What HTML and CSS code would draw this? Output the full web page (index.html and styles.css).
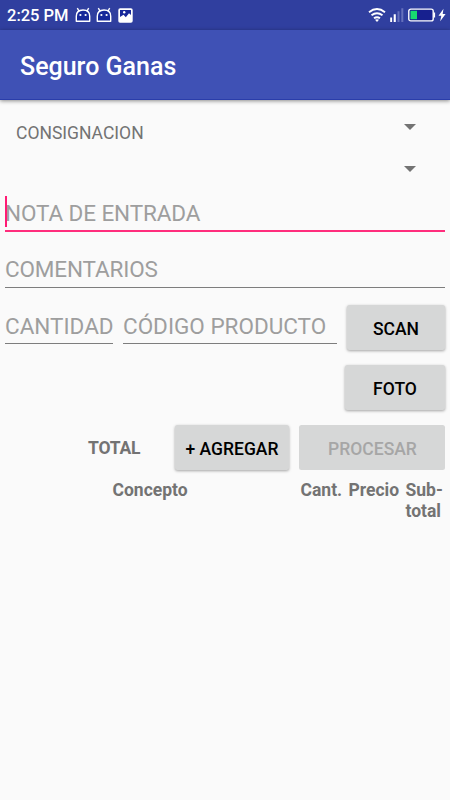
FILE: index.html
```html
<!DOCTYPE html>
<html lang="es">
  <head>
    <meta charset="utf-8">
    <title>Seguro Ganas</title>
    <link rel="stylesheet" href="styles.css">
  </head>

  <body>
    <div class="status">
      <span class="hora">2:25 PM</span>
      <svg class="android" width="16" height="16" viewBox="0 0 16 16">
        <path d="M1.3 14.2V9.2C1.3 5.5 3.8 3 8 3S14.7 5.5 14.7 9.2v5z M4 4L2.3 1.2 M12 4L13.7 1.2"/>
        <circle cx="5.4" cy="8" r="1.1"/>
        <circle cx="10.6" cy="8" r="1.1"/>
      </svg>
      <svg class="android" width="16" height="16" viewBox="0 0 16 16">
        <path d="M1.3 14.2V9.2C1.3 5.5 3.8 3 8 3S14.7 5.5 14.7 9.2v5z M4 4L2.3 1.2 M12 4L13.7 1.2"/>
        <circle cx="5.4" cy="8" r="1.1"/>
        <circle cx="10.6" cy="8" r="1.1"/>
      </svg>
      <svg class="imagen" width="15" height="15" viewBox="0 0 15 15">
        <rect x="0.3" y="0.3" width="14.4" height="14.4" rx="1.8" fill="#fff"/>
        <path d="M2 2h11v5l-2-1.8-3.2 4-2.3-2.4L2 9z" fill="#17289a"/>
        <circle cx="6.2" cy="4.3" r="1.2" fill="#fff"/>
      </svg>
      <span class="espacio"></span>
      <svg class="wifi" width="18" height="15" viewBox="0 0 18 15">
        <path d="M1 4.2Q9-2 17 4.2M3.5 7.3Q9 3 14.5 7.3M6 10.3Q9 8 12 10.3"/>
        <path d="M7 11.7Q9 10.6 11 11.7L9 14z" class="punto"/>
      </svg>
      <svg class="senal" width="14" height="14" viewBox="0 0 14 14">
        <path d="M0.2 9.5h1.9V14H.2zM3.7 6.3h2.1V14H3.7z" fill="#fff"/>
        <path d="M7.5 3.2h2V14h-2zM11.3 0.2h2V14h-2z" fill="#6570bc"/>
      </svg>
      <svg class="bateria" width="28" height="14" viewBox="0 0 28 14">
        <rect x="0.8" y="1.1" width="24.4" height="11.8" rx="2" fill="#17208f" stroke="#fff" stroke-width="1.4"/>
        <rect x="2.5" y="2.8" width="6.5" height="8.4" fill="#17dc70"/>
        <path d="M25.5 4.5h1.6v5h-1.6z" fill="#fff"/>
      </svg>
      <svg class="rayo" width="8" height="14" viewBox="0 0 8 14">
        <path d="M5.5 0.7L0.5 7.8H3.3L2.2 13.3 7.6 5.9H4.7z" fill="#fff"/>
      </svg>
    </div>

    <header class="barra">
      <h1>Seguro Ganas</h1>
    </header>

    <main class="contenido">
      <div class="spinner">
        <span class="spinner-texto">CONSIGNACION</span>
        <span class="flecha"></span>
      </div>
      <div class="spinner spinner-vacio">
        <span class="flecha"></span>
      </div>

      <div class="campo campo-activo"><span class="cursor"></span>NOTA DE ENTRADA</div>
      <div class="campo campo-comentarios">COMENTARIOS</div>

      <div class="fila">
        <div class="campo campo-cantidad">CANTIDAD</div>
        <div class="campo campo-codigo">CÓDIGO PRODUCTO</div>
        <button class="boton boton-scan">SCAN</button>
      </div>

      <div class="fila fila-foto">
        <button class="boton boton-foto">FOTO</button>
      </div>

      <div class="fila fila-total">
        <span class="total">TOTAL</span>
        <button class="boton boton-agregar">+ AGREGAR</button>
        <button class="boton boton-procesar" disabled>PROCESAR</button>
      </div>

      <div class="tabla">
        <span>Concepto</span>
        <span>Cant.</span>
        <span>Precio</span>
        <span>Sub-<br>total</span>
      </div>
    </main>
  </body>
</html>
```

FILE: styles.css
```css
* {
  box-sizing: border-box;
}

body {
  margin: 0;
  min-height: 100vh;
  background-color: #fafafa;
  font-family: Roboto, "Liberation Sans", sans-serif;
  color: #737373;
}

/* barra de estado */
.status {
  display: flex;
  align-items: center;
  height: 30px;
  padding: 0 4px 0 7px;
  background-color: #303f9f;
  color: #fff;
}

.hora {
  width: 68px;
  font-size: 16.5px;
  font-weight: 500;
  line-height: 30px;
  white-space: nowrap;
  padding-top: 1px;
}

.android {
  margin-right: 5px;
  fill: none;
  stroke: #fff;
  stroke-width: 1.4;
  stroke-linejoin: round;
}

.android path {
  fill: #17289a;
}

.android circle {
  fill: #fff;
  stroke: none;
}

.imagen {
  margin-left: 1px;
}

.espacio {
  flex: 1;
}

.wifi {
  margin-right: 4px;
  fill: none;
  stroke: #fff;
  stroke-width: 1.9;
}

.wifi .punto {
  fill: #fff;
  stroke: none;
}

.senal {
  margin-right: 4px;
}

.bateria {
  margin-right: 2px;
}

/* titulo */
.barra {
  display: flex;
  align-items: center;
  height: 70px;
  padding: 3px 20px 0;
  background-color: #3f51b5;
  border-bottom: 1px solid #2a3daa;
  box-shadow: 0 1px 4px rgba(0, 0, 0, 0.45);
}

.barra h1 {
  margin: 0;
  font-size: 25px;
  font-weight: 500;
  color: #fff;
}

.contenido {
  padding: 6px 5px 0;
}

.spinner {
  display: flex;
  justify-content: space-between;
  align-items: flex-start;
  height: 42px;
  padding: 18px 29px 0 11px;
}

.spinner-texto {
  font-size: 17.5px;
  line-height: 18px;
}

.spinner-vacio {
  justify-content: flex-end;
}

.flecha {
  border-left: 6px solid transparent;
  border-right: 6px solid transparent;
  border-top: 6.5px solid #737373;
}

/* campos de texto */
.campo {
  position: relative;
  height: 36px;
  border-bottom: 1px solid #7d7d7d;
  color: #9e9e9e;
  font-size: 22.5px;
  line-height: 34px;
  white-space: nowrap;
}

.campo-activo {
  margin-top: 6px;
  border-bottom: 2px solid #ff2d7c;
  letter-spacing: -0.1px;
}

.cursor {
  position: absolute;
  left: 0;
  top: 0;
  width: 2px;
  height: 31px;
  background-color: #ff1a75;
}

.campo-comentarios {
  margin-top: 20px;
  line-height: 35px;
  letter-spacing: -0.15px;
}

.fila {
  display: flex;
  align-items: flex-start;
  margin-top: 17px;
  gap: 10px;
}

.fila .campo {
  height: 39px;
  line-height: 43px;
}

.campo-cantidad {
  width: 108px;
}

.campo-codigo {
  width: 214px;
}

/* botones */
.boton {
  height: 45px;
  padding: 2px 0 0;
  border: none;
  border-radius: 2.5px;
  background-color: #d6d7d7;
  box-shadow: 0 1px 3px rgba(0, 0, 0, 0.35);
  color: #000;
  font-family: inherit;
  font-size: 17.5px;
  font-weight: 500;
  white-space: nowrap;
}

.boton-scan {
  width: 98px;
}

.fila-foto {
  margin-top: 15px;
  justify-content: flex-end;
}

.boton-foto {
  width: 100px;
}

.fila-total {
  margin-top: 15px;
  justify-content: flex-end;
}

.total {
  width: 77px;
  font-size: 17.5px;
  font-weight: 700;
  line-height: 46px;
  letter-spacing: -0.2px;
}

.boton-agregar {
  width: 114px;
}

.boton-procesar {
  width: 146px;
  padding-left: 1px;
  box-shadow: none;
  color: #a6a6a6;
}

.tabla {
  display: grid;
  grid-template-columns: 188px 48px 57px 38px;
  justify-content: end;
  margin-top: 9px;
  padding-right: 1.5px;
  font-size: 17.5px;
  font-weight: 700;
  line-height: 20.5px;
}
```
